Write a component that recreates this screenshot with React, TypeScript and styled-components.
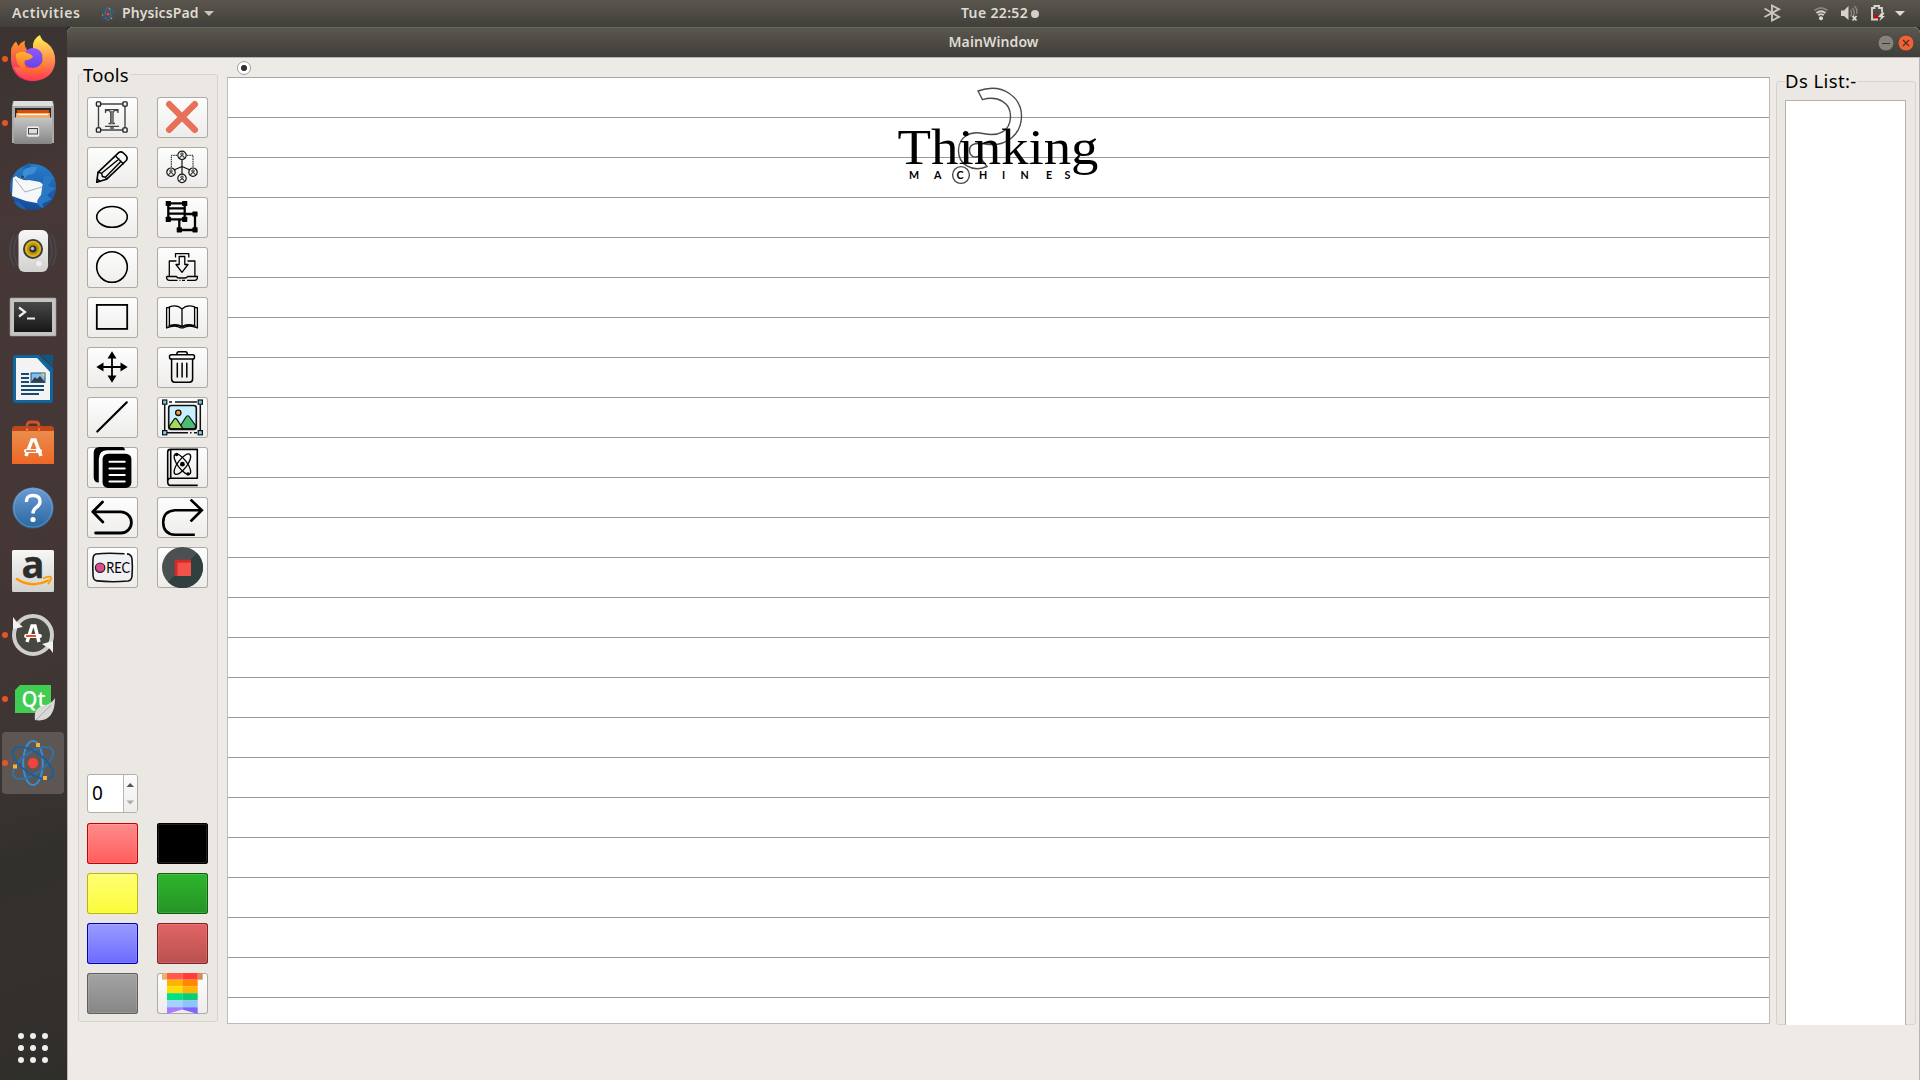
import React from 'react';
import styled, { createGlobalStyle } from 'styled-components';

const Global = createGlobalStyle`
  * { box-sizing: border-box; }
  body { margin: 0; overflow: hidden; background: #35312e; font-family: "Noto Sans", "Open Sans", sans-serif; }
  svg { display: block; overflow: visible; flex: none; }
`;

const Desktop = styled.div`
  width: 1920px;
  height: 1080px;
  display: grid;
  grid-template-rows: 27px 1fr;
  background: #383230;
`;
const TopBar = styled.header`
  display: grid;
  grid-template-columns: 961px auto 1fr;
  align-items: center;
  background: linear-gradient(#5a564e, #413f3a);
  color: #dfdbd2;
  font: 600 14px/25px "Noto Sans", sans-serif;
`;
const BarSide = styled.div`
  display: flex;
  align-items: center;
  padding-left: 12px;
`;
const BarLabel = styled.span<{ $w: number; $sp?: number; $pad?: number }>`
  width: ${p => p.$w}px;
  padding: 0 0 2px ${p => p.$pad ?? 0}px;
  letter-spacing: ${p => p.$sp ?? 0}px;
  white-space: nowrap;
`;
const Clock = styled.div`
  display: flex;
  align-items: center;
`;
const ClockDot = styled.i`
  width: 8px;
  height: 8px;
  border-radius: 50%;
  background: #d3d0c9;
`;
const Tray = styled.div`
  display: flex;
  justify-content: flex-end;
`;
const Work = styled.div`
  display: flex;
  min-height: 0;
  background: #2b2826;
`;
const Launcher = styled.nav`
  width: 67px;
  display: flex;
  flex-direction: column;
  background: linear-gradient(160deg, #3a3331 0%, #463836 18%, #453735 45%, #3e3634 66%, #32302d 78%, #34302d 88%, #302e2b 100%);
`;
const LaunchItem = styled.div<{ $active?: boolean }>`
  height: 62px;
  width: 62px;
  margin: 1px 0 1px 2px;
  border-radius: 4px;
  display: flex;
  align-items: center;
  background: ${p => (p.$active ? '#5d5653' : 'transparent')};
`;
const RunDot = styled.i<{ $on?: boolean }>`
  width: 6px;
  height: 6px;
  border-radius: 50%;
  margin-right: 1px;
  background: ${p => (p.$on ? '#e95420' : 'transparent')};
`;
const AppsButton = styled.div`
  margin: auto 0 17px 18px;
  display: grid;
  grid-template-columns: repeat(3, 6px);
  gap: 6px;
`;
const AppsDot = styled.i`
  height: 6px;
  border-radius: 50%;
  background: #f0efed;
`;
const Window = styled.main`
  flex: 1;
  display: flex;
  flex-direction: column;
  border-radius: 6px 6px 0 0;
  overflow: hidden;
  background: #eeebe6;
`;
const TitleBar = styled.div`
  height: 30px;
  display: grid;
  grid-template-columns: 1fr auto 1fr;
  align-items: center;
  background: linear-gradient(#5a574f, #403e39);
  border-top: 1px solid #67645c;
  color: #dfdbd2;
  font: 600 14px/25px "Noto Sans", sans-serif;
`;
const Controls = styled.div`
  display: flex;
  justify-content: flex-end;
  gap: 4px;
  padding-right: 6px;
`;
const Content = styled.div`
  flex: 1;
  display: flex;
  align-items: flex-start;
  border: solid #b9b5b0;
  border-width: 1px 1px 0;
  background: #eeebe6;
`;
const Group = styled.section<{ $w: number; $h: number; $mt: number; $ml: number }>`
  position: relative;
  flex: none;
  width: ${p => p.$w}px;
  height: ${p => p.$h}px;
  margin: ${p => p.$mt}px 0 0 ${p => p.$ml}px;
  border: 1px solid #d6d3ce;
  border-radius: 3px;
  background: #ebe8e3;
  display: flex;
  flex-direction: column;
`;
const GroupTitle = styled.h2<{ $x: number; $y: number; $w: number; $sp: number }>`
  position: absolute;
  left: ${p => p.$x}px;
  top: ${p => p.$y}px;
  width: ${p => p.$w}px;
  margin: 0;
  background: linear-gradient(#eeebe6 50%, #ebe8e3 50%);
  white-space: nowrap;
  color: #000;
  font: 400 18.5px/26px "Noto Sans", sans-serif;
  letter-spacing: ${p => p.$sp}px;
`;
const ButtonGrid = styled.div<{ $mt: number }>`
  display: grid;
  grid-template-columns: 51px 51px;
  grid-auto-rows: 41px;
  gap: 9px 19px;
  margin: ${p => p.$mt}px 0 0 8px;
`;
const ToolButton = styled.button<{ $line?: string; $from?: string; $to?: string }>`
  width: 51px;
  height: 41px;
  padding: 0;
  display: flex;
  border: 0;
  border-radius: 3px;
  box-shadow: inset 0 0 0 1px ${p => p.$line ?? '#adaaa6'}, inset 0 0 0 2px #ffffff20;
  background: linear-gradient(${p => p.$from ?? '#fefefe'}, ${p => p.$to ?? '#edecea'});
`;
const Spin = styled.div`
  width: 51px;
  height: 39px;
  margin: 186px 0 0 8px;
  display: grid;
  grid-template-columns: 1fr 14px;
  border: 1px solid #b3b0ab;
  border-radius: 3px;
  background: #fff;
  overflow: hidden;
`;
const SpinValue = styled.span`
  padding-left: 4px;
  font: 400 19px/36px "Noto Sans", sans-serif;
`;
const SpinArrows = styled.div`
  border-left: 1px solid #b9b6b2;
  background: linear-gradient(#fcfcfc, #eeedeb);
`;
const Page = styled.div`
  width: 1543px;
  height: 947px;
  border: 1px solid #a5a5a5;
  border-left-color: #bbb;
  border-right-color: #bbb;
  border-bottom-color: #bbb;
  background: repeating-linear-gradient(#fff 0 39px, #9a9a9a 39px 40px);
  padding-left: 670px;
`;
const PageColumn = styled.div`
  margin-left: 9px;
`;
const PageTabs = styled.div`
  height: 19px;
  padding: 3px 0 0 10px;
`;
const Radio = styled.div`
  width: 14px;
  height: 14px;
  border-radius: 50%;
  border: 1px solid #a4a19d;
  background: radial-gradient(circle, #333 0 2.7px, #fff 3.5px);
`;
const List = styled.div`
  width: 121px;
  height: 925px;
  flex: none;
  margin: 18px 0 0 8px;
  border: solid #b5b2ae;
  border-width: 1px 1px 0;
  background: #fff;
`;

const S = { fill: 'none', stroke: '#000', strokeWidth: 1.5, strokeLinecap: 'round', strokeLinejoin: 'round' } as const;
const Tool = ({ children }: { children?: React.ReactNode }) => (
  <svg width="51" height="41" viewBox="0 0 51 41">{children}</svg>
);

const Person = ({ x, y }: { x: number; y: number }) => (
  <g transform={`translate(${x} ${y})`} fill="none" stroke="#111">
    <circle r="4.2" strokeWidth="1.2" fill="#f8f8f7" />
    <circle cy="-1.2" r="1.2" strokeWidth=".9" />
    <path d="M-2.3 2.8Q-2 .5 0 .5T2.3 2.8" strokeWidth="1" />
  </g>
);

const tools: React.ReactNode[] = [
  <Tool>
    <g fill="none" stroke="#444" strokeWidth="1.4">
      <path d="M11.5 7H38V33H11.5Z" />
      {[[11.5, 7], [38, 7], [11.5, 33], [38, 33]].map(([x, y], i) => <rect key={i} x={x - 2.1} y={y - 2.1} width="4.2" height="4.2" rx=".8" fill="#f5f5f4" stroke="#222" />)}
      <path d="M18.5 16V12.7H31V16M18.5 14Q23.7 12 23.7 17V26M31 14Q26 12 26 17V26M21.5 26.5H28M18 29.3H32M23 31H27" strokeWidth="1.3" />
      <path d="M24.8 14V27" strokeWidth="2" stroke="#777" />
    </g>
  </Tool>,
  <Tool><path d="M12.2 7.2L37.8 32.8M37.8 7.2L12.2 32.8" stroke="#e86f58" strokeWidth="6.4" strokeLinecap="round" /></Tool>,
  <Tool><g {...S} strokeWidth={1.6}><path d="M9.7 35.3L11 25.3L31.7 5.7Q34 4 36.4 6L39.4 9Q41 11.3 39.3 13.5L19.5 32.3Z" /><path d="M28.5 9L36.3 16.8M11 25.3L14.6 26.2L15.4 29.5L18.5 30.2L19.5 32.3M14.6 26.2L32 12M18.5 30.2L33.8 14.5M10.4 32L13 34.3" strokeWidth="1.4" /></g></Tool>,
  <Tool>
    <g fill="none" stroke="#111" strokeWidth="1"><path d="M20 8.3H14.3V20M30 8.3H36V20" strokeDasharray="1.5 .8" /><path d="M25 12V27M25 19.5L17 23M25 19.5L33 23" strokeWidth="1.2" /></g>
    <Person x={25} y={8.3} /><Person x={14} y={25.2} /><Person x={36} y={25.2} /><Person x={25} y={31.4} />
  </Tool>,
  <Tool><ellipse cx="25" cy="19.9" rx="15.3" ry="10.4" {...S} strokeWidth={1.6} /></Tool>,
  <Tool>
    <g fill="none" stroke="#000" strokeWidth="2.3"><path d="M11.3 6.3H27.7V22.3H11.3ZM28 17H38V33H22.3V23M11 11.4H28M11 16.6H28" /></g>
    {[[11.3, 6.5], [27.7, 6.5], [11.3, 22.3], [27.7, 22.3], [38, 17], [22.3, 32.8], [38, 32.8]].map(([x, y], i) => <rect key={i} x={x - 2.6} y={y - 2.6} width="5.2" height="5.2" rx=".6" />)}
  </Tool>,
  <Tool><circle cx="25" cy="20" r="15.3" {...S} strokeWidth={1.6} /></Tool>,
  <Tool><g {...S} strokeWidth={1.3} strokeLinecap="butt"><path d="M18.5 10.5V6.7H31.8V10.5M19.5 14H12.3V29M30.5 14H37.9V29M22.2 9.5H27.8V17.5H31L25 25.3L19 17.5H22.2ZM9.5 29.5H19.5Q20 31 22 31H28Q30 31 30.5 29.5H40.5Q40.5 33.4 37.5 33.4H30M9.5 29.5Q9.5 33.4 12.5 33.4H20.5M22.5 33.4H23.5M25 33.4H28" /></g></Tool>,
  <Tool><rect x="9.8" y="7.9" width="30.4" height="24" {...S} strokeWidth={1.8} strokeLinejoin="miter" /></Tool>,
  <Tool><g {...S} strokeWidth={1.3}><path d="M25 12V29.5Q20 26.5 12.4 28.7V9.8Q20 7 25 12Q30 7 37.6 9.8V28.7Q30 26.5 25 29.5" /><path d="M12 10.7H9.6V31Q18 27.5 23.5 30.8H26.5Q32 27.5 40.4 31V10.7H38" /><path d="M11 29.2Q19 27 25 30Q31 27 39 29.2" strokeWidth="1" /></g></Tool>,
  <Tool><path d="M25 8V32M13 20H37" stroke="#000" strokeWidth="1.8" /><path d="M25 4.3L29.5 11.5H20.5ZM25 35.7L29.5 28.5H20.5ZM9.3 20L16.5 15.5V24.5ZM40.7 20L33.5 15.5V24.5Z" /></Tool>,
  <Tool><g {...S}><rect x="12.5" y="7.8" width="25" height="4.2" rx="1.8" /><path d="M19.8 7.3Q20 4.8 21.7 4.8H28.5Q30.2 4.8 30.4 7.3M14.6 12.5V32Q14.6 35.2 17.8 35.2H32.4Q35.6 35.2 35.6 32V12.5M20.3 16.3V30M25.1 16.3V30M29.8 16.3V30" /></g></Tool>,
  <Tool><path d="M10.3 34.5L39.8 5.3" stroke="#000" strokeWidth="2.2" strokeLinecap="round" /></Tool>,
  <Tool>
    <path d="M7.7 8V33M43.3 8V33M12 5.1H15M18 5.1H40M10 35.7H31M33 35.7H34.5M37 35.7H40" stroke="#111" strokeWidth="1.5" fill="none" />
    <rect x="11.7" y="8.5" width="27.6" height="24" rx="2.5" fill="#c7efff" stroke="#111" strokeWidth="1.6" />
    <circle cx="21.3" cy="15.8" r="2.7" fill="#ff9f2e" stroke="#111" strokeWidth="1.3" />
    <path d="M21.5 31.7L29 20Q30.5 17.5 32.5 20L38.5 28.5V30Q38.5 31.7 36.8 31.7Z" fill="#4cbe72" stroke="#111" strokeWidth="1.2" />
    <path d="M12.4 29.2L17.3 22.2Q18.5 20.7 19.7 22.2L26 31.7H14Q12.4 31.7 12.4 29.2Z" fill="#a6d957" stroke="#111" strokeWidth="1.2" />
    {[[7.7, 5.1], [43.3, 5.1], [7.7, 35.7], [43.3, 35.7]].map(([x, y], i) => <rect key={i} x={x - 2.1} y={y - 2.1} width="4.2" height="4.2" fill="#7ecbf0" stroke="#111" strokeWidth="1.2" />)}
  </Tool>,
  <Tool>
    <path d="M35 0H12.5Q6.7 0 6.7 6V30Q6.7 35.5 11.8 35.5V12.5Q11.8 3.3 20.5 3.3H38Q37.5 0 35 0Z" />
    <rect x="15.6" y="6.7" width="28.8" height="34.2" rx="5.5" />
    <path d="M22.5 14.7H37.7M22.5 21.5H37.7M22.5 28H37.7M22.5 34.5H37.7" stroke="#fff" strokeWidth="2.1" strokeLinecap="round" />
  </Tool>,
  <Tool>
    <g {...S} strokeLinecap="butt" strokeWidth={1.5}>
      <path d="M40.7 38.4H13.5Q10.7 38.4 10.7 34.8V5Q10.7 2.4 13.5 2.4H40.3V31.2H13.5Q10.7 31.2 10.7 34.8M13.7 2.5V31" strokeWidth="1.6" />
      {[53, -53].map(a => <ellipse key={a} cx="25.4" cy="17.2" rx="12.3" ry="4.6" transform={`rotate(${a} 25.4 17.2)`} strokeWidth="1.3" />)}
    </g>
    <circle cx="25.4" cy="17.2" r="2.4" /><circle cx="19.6" cy="7.5" r="1.7" /><circle cx="31" cy="27" r="1.7" />
  </Tool>,
  <Tool><path d="M15.5 5L5.8 14.8L15.8 25M6.3 14.8H33.8A10.6 10.6 0 0 1 33.8 36H8.6" {...S} strokeWidth={2.8} /></Tool>,
  <Tool><path d="M34.5 3.5L44.8 13.2L34.5 23.5M44 13.2H18Q6.2 14 6.2 25.5T18 37.8H36.5" {...S} strokeLinecap="square" strokeLinejoin="miter" strokeWidth={2.6} /></Tool>,
  <Tool>
    <path d="M37.5 6.8Q20 5.6 9 7Q6.3 7.6 6 12Q5.5 20 6.1 29Q6.6 33.5 10 33.9Q25 35.5 41 34Q44.7 33.5 45 29Q45.8 20 45 12Q44.5 7.2 40 6.9" fill="#f1f0f4" stroke="#111" strokeWidth="1.6" />
    <circle cx="13.1" cy="20.7" r="4.7" fill="#dc4a8f" stroke="#222" strokeWidth="1.2" />
    <text x="19.2" y="26.2" fontFamily="Lato, sans-serif" fontSize="15.3" textLength="24" lengthAdjust="spacingAndGlyphs">REC</text>
  </Tool>,
  <Tool>
    <circle cx="25.5" cy="20.5" r="20.5" fill="#4b5053" /><path d="M40 6A20.5 20.5 0 0 1 11 35Z" fill="#2f403e" />
    <path d="M17.7 12.7H34V29H17.7Z" fill="#d62b27" /><path d="M20.5 15.7H34V29H20.5Z" fill="#f2524a" />
  </Tool>,
];

const swatches = [
  ['#c40000', '#ff8c8c', '#ff5c5c'], ['#000', '#000', '#000'],
  ['#bcb800', '#ffff76', '#fbfb38'], ['#0b6310', '#2fb52d', '#259425'],
  ['#0000b4', '#9c9cff', '#6a6aff'], ['#852024', '#e26464', '#b95151'],
  ['#5f5f5f', '#a4a4a4', '#868686'],
];
const stripes = [
  ['#ff5a4c', '#ff3e3a', 0, 6.7], ['#ffb400', '#ff8a00', 6.7, 6.6], ['#ffdc00', '#ffb400', 13.3, 6.9],
  ['#00e084', '#0ccb72', 20.2, 7.2], ['#a5d2ff', '#8fc3ff', 27.4, 7],
] as const;

const Launch = ({ children }: { children?: React.ReactNode }) => <svg width="48" height="48" viewBox="0 0 48 48">{children}</svg>;

const Atom = ({ size }: { size: number }) => (
  <svg width={size} height={size} viewBox="0 0 48 48">
    <g fill="none" strokeWidth="1.9">
      <ellipse cx="24" cy="24" rx="9.8" ry="22" stroke="#3590dc" />
      <ellipse cx="24" cy="24" rx="23.500" ry="10.5" transform="rotate(-35 24 24)" stroke="#2873b0" />
      <ellipse cx="24" cy="24" rx="23.500" ry="10.5" transform="rotate(35 24 24)" stroke="#175f9f" />
    </g>
    <circle cx="24" cy="24" r="5.2" fill="#ee4340" />
    <path d="M27 4H31V8H27ZM4 25.5H8V29.5H4ZM34 37H38V41H34Z" fill="#fbb034" />
  </svg>
);

const launchers: { run?: boolean; active?: boolean; icon: React.ReactNode }[] = [
  { run: true, icon: <Launch>
    <path d="M2 15Q3 10 7 6.5L9.5 11Q12 7 16 5.5Q15 10 17 13L33 42Q28 47 20 46Q3 43 2 25Z" fill="url(#ff)" />
    <path d="M24 13Q23 4 31 0Q32 5 38 8Q47 15 46.2 27Q44 44 26 46Q10 46 5 32L15 33Q32 36 24 13Z" fill="url(#fy)" />
    <circle cx="24" cy="23" r="10" fill="url(#fp)" />
    <path d="M7 19Q14 15 18 18Q23 19 24 22Q20 26 16 25Q14 31 20 35Q26 37 31 33Q35 29 33 20Q40 29 33 36Q24 43 14 35Q6 28 7 19Z" fill="url(#fo)" />
  </Launch> },
  { run: true, icon: <Launch>
    <path d="M4 2H44L45 8V44H3V8Z" fill="#a9a9a9" /><path d="M5 2H43L44.5 7H3.5Z" fill="#dedede" />
    <path d="M6 9H42V20H6Z" fill="#2c2826" /><path d="M8 11H40V19H8Z" fill="#cf4f14" /><path d="M7 14H41V20H7Z" fill="#f6a655" /><path d="M9 15.5H39" stroke="#fff3e0" strokeWidth="1.4" />
    <rect x="5" y="18.5" width="38" height="26.5" rx="1" fill="url(#gr)" />
    <rect x="17.5" y="27" width="13" height="11" rx="2" fill="#eee" stroke="#999" strokeWidth=".5" /><rect x="19.5" y="29.5" width="9" height="5.5" fill="#dedede" stroke="#444" />
  </Launch> },
  { icon: <Launch>
    <circle cx="24" cy="24" r="23" fill="url(#tb)" />
    <path d="M13 6Q17 0 22 0L21 5ZM5 38Q8 46 18 47L10 39Z" fill="#1c63b0" />
    <path d="M14 12Q8 15 10 20L19 12Q27 11 28 4Q13 3 14 12Z" fill="#3e8fd2" />
    <path d="M4 15L7 13Q12 18 20 17L31 19L36 23L33 41L17 38L3 33Z" fill="#f6f7f9" />
    <path d="M6 16L16 29L33 24" fill="none" stroke="#a6afba" />
    <path d="M35 12L45 14L39 23L47 25L38 32L43 36L33 41L35 45Q23 42 32 32Z" fill="#2878c4" />
    <circle cx="13.5" cy="14" r="1.5" fill="#443a37" />
  </Launch> },
  { icon: <Launch>
    <path d="M5 8Q-3 24 5 39M9 7Q1 24 9 39M43 8Q51 24 43 39M39 7Q47 24 39 39" stroke="#496177" fill="none" strokeWidth="1.4" opacity=".45" />
    <rect x="9.5" y="3" width="29.5" height="42" rx="6" fill="url(#wh)" />
    <circle cx="24" cy="22" r="10" fill="#34373d" /><circle cx="24" cy="22" r="8.2" fill="#d9b11d" /><circle cx="24" cy="22" r="6" fill="#bc9306" /><circle cx="24" cy="22" r="3.5" fill="#2d3038" /><circle cx="23.5" cy="21.5" r="1.7" fill="#bbc3c9" />
    <circle cx="30" cy="36.5" r="3.7" fill="#eee" stroke="#ccc" />
  </Launch> },
  { icon: <Launch>
    <g transform="translate(0 1.5)">
      <rect x="1" y="5.5" width="46" height="38" rx="1" fill="#c4c4c4" stroke="#999" strokeWidth=".6" /><rect x="5" y="9.5" width="38" height="30" fill="url(#bk)" />
      <path d="M10 15L16 19.5L10 24" fill="none" stroke="#eee" strokeWidth="2.2" /><path d="M18 26H26" stroke="#eee" strokeWidth="2" />
    </g>
  </Launch> },
  { icon: <Launch>
    <path d="M7 0H30L44 13V45Q44 48 41 48H7Q4 48 4 45V3Q4 0 7 0Z" fill="#0e659f" /><path d="M32 0H44V12Z" fill="#125682" />
    <path d="M7 3H28L41 17V45H7Z" fill="#f3f3f3" />
    <path d="M12 19H20M12 23H20M12 27H20M12 31H35M12 35H35M12 39H30" stroke="#174c70" strokeWidth="1.9" />
    <rect x="22" y="18" width="14" height="9.5" fill="#81bdf0" stroke="#1a577f" /><path d="M22 27L26 22L28 24L31 21L36 27Z" fill="#363d43" /><path d="M32 18.5H35.5V22Z" fill="#f2cd43" />
  </Launch> },
  { icon: <Launch>
    <path d="M18 15V7Q18 3 22 3H26Q30 3 30 7V15" fill="none" stroke="#d35228" strokeWidth="2.8" />
    <path d="M3 9L5 7H43L45 9V16H3Z" fill="#c04719" /><path d="M3 12H45V45H3Z" fill="url(#or)" />
    <path d="M18 9V13M30 9V13" stroke="#f1713b" strokeWidth="2" />
    <path d="M17 37L23 21H26L32 37" fill="none" stroke="#fff" strokeWidth="3.5" /><path d="M17 32H31" stroke="#fff" strokeWidth="4" strokeLinecap="round" /><path d="M17 32H27" stroke="#eb6527" strokeWidth="1.6" />
  </Launch> },
  { icon: <Launch>
    <circle cx="24" cy="25" r="20.5" fill="url(#bl)" /><circle cx="24" cy="25" r="19" fill="none" stroke="#7fb1dc" opacity=".5" />
    <path d="M17.5 19Q17 12.5 24 12.5Q31 12.5 31 18.5Q31 22 27 24.7Q24 26.8 24 30.5" fill="none" stroke="#fff" strokeWidth="3.4" /><circle cx="24" cy="36.5" r="2.6" fill="#fff" />
  </Launch> },
  { icon: <Launch>
    <rect x="3" y="3" width="42" height="42" rx="1.5" fill="url(#wh)" />
    <text x="24" y="31" textAnchor="middle" fontFamily="Open Sans, sans-serif" fontWeight="700" fontSize="38" fill="#2c2c2c" stroke="#2c2c2c" strokeWidth=".3">a</text>
    <path d="M7 31.500Q22 42 40 33" fill="none" stroke="#f90" strokeWidth="2.5" /><path d="M34 31.5Q42 28 42 31Q42 34 39 37" fill="none" stroke="#f90" strokeWidth="1.8" />
  </Launch> },
  { run: true, icon: <Launch>
    <circle cx="24" cy="24" r="19" fill="#474741" stroke="#cfcfcc" strokeWidth="4" />
    <path d="M4 6L7 10L14 16L4 18ZM44 42L41 38L33 33L44 30Z" fill="#f1f1ef" />
    <path d="M18 31L23 15H26L30 31" fill="none" stroke="#fff" strokeWidth="3.4" /><path d="M17 25H31" stroke="#fff" strokeWidth="3.8" strokeLinecap="round" /><path d="M17 25H27" stroke="#e95420" strokeWidth="2" />
  </Launch> },
  { run: true, icon: <Launch>
    <path d="M11 10H42V38H6V15Z" fill="#41cd52" />
    <text x="12.5" y="31.5" fontFamily="Open Sans, sans-serif" fontWeight="600" fontSize="22" textLength="24" lengthAdjust="spacingAndGlyphs" fill="#fff">Qt</text>
    <path d="M46 23Q46 45 30 45.5L26 45Q24 32 37 30Q43 28 46 23Z" fill="#d8d8d6" /><path d="M27 45L42 30" stroke="#aaa" />
  </Launch> },
  { run: true, active: true, icon: <Atom size={48} /> },
];

const gradients: [string, string, string][] = [
  ['ff', '#ff9820', '#f0127c'], ['fy', '#fff44f', '#ff3750'], ['fp', '#9059ff', '#6644e0'], ['fo', '#ffb52e', '#ff5a2a'],
  ['gr', '#c6c6c6', '#858585'], ['tb', '#287dcc', '#164a9a'], ['wh', '#f7f7f6', '#d1d1cf'], ['bk', '#484848', '#171717'],
  ['or', '#e98d4c', '#ee6726'], ['bl', '#6b9bd4', '#29679f'],
];

const Gradients = () => (
  <defs>
    {gradients.map(([id, a, b]) => (
      <linearGradient key={id} id={id} x1="0" y1="0" x2="0" y2="1"><stop stopColor={a} /><stop offset="1" stopColor={b} /></linearGradient>
    ))}
  </defs>
);

const StatusIcons = () => (
  <svg width="160" height="27" viewBox="1760 0 160 27">
    <Gradients />
    <path d="M1764.5 8.5L1779 17L1772 20.5V5.5L1779 9.2L1764.5 17" fill="none" stroke="#c9c6bf" strokeWidth="1.9" />
    <g fill="none" stroke="#d6d3cc" strokeWidth="1.8">
      <path d="M1814.5 10.5Q1821 5.5 1827.5 10.5" stroke="#85827b" /><path d="M1816.5 13Q1821 9.5 1825.5 13M1818.3 15.2Q1821 13 1823.7 15.2" />
    </g>
    <circle cx="1821" cy="18.3" r="2" fill="#dfdbd2" />
    <path d="M1841 10.5H1844L1848.5 6V20L1844 16H1841Z" fill="#d6d3cc" />
    <path d="M1850.5 10Q1852.5 13 1850.5 16.5M1852.5 8Q1856 13 1852.5 17M1854.5 6Q1858 10 1856.5 14" fill="none" stroke="#8b8881" strokeWidth="1.4" />
    <path d="M1852.5 16L1856.5 20.5M1856.5 16L1852.5 20.5" stroke="#dfdbd2" strokeWidth="1.8" />
    <path d="M1878 19.5H1872V8H1874.5V6H1879V8H1882V12" fill="none" stroke="#d6d3cc" strokeWidth="1.9" /><path d="M1874 15H1878V18H1874Z" fill="#d00" />
    <path d="M1882 12L1878 17H1881L1879.5 21L1885 16H1882.5L1884.5 13Z" fill="#dfdbd2" />
    <path d="M1895 11H1905L1900 16Z" fill="#dfdbd2" />
  </svg>
);

const letterX = [909, 934, 956.5, 979, 1002, 1020.5, 1046, 1064.5];

const Logo = () => (
  <svg width="204" height="110" viewBox="898 78 204 110">
    <g fill="none" stroke="#4b4b4b" strokeWidth="1.4">
      <path d="M978 91C1003 82 1022 98 1021.5 117C1021 134 1007 146 989 144.5C979 143 969 142 969.5 151C970 156 974 158.5 979 156L987 166.5C972 173 958 164 958.5 150C959 137 970 130.5 983 133.5C999 137 1010 131 1010.5 117C1011 103 998 95 982.5 99.7Z" />
      <circle cx="961" cy="175" r="8.4" />
    </g>
    <text x="897.5" y="164.4" fontFamily="Liberation Serif, serif" fontSize="50" textLength="201" lengthAdjust="spacingAndGlyphs">Thinking</text>
    <text y="179" fontFamily="Lato, Open Sans, sans-serif" fontWeight="700" fontSize="10.7">
      {'MACHINES'.split('').map((c, i) => <tspan key={i} x={letterX[i]}>{c}</tspan>)}
    </text>
  </svg>
);

export default function App() {
  return (
    <Desktop>
      <Global />
      <TopBar>
        <BarSide>
          <BarLabel $w={89} $sp={0.6}>Activities</BarLabel>
          <Atom size={14} />
          <BarLabel $w={89} $pad={7} $sp={0.1}>PhysicsPad</BarLabel>
          <svg width="10" height="6"><path d="M0 0H10L5 5Z" fill="#c9c6bf" /></svg>
        </BarSide>
        <Clock><BarLabel $w={70} $sp={0.35}>Tue 22:52</BarLabel><ClockDot /></Clock>
        <Tray><StatusIcons /></Tray>
      </TopBar>
      <Work>
        <Launcher>
          {launchers.map((l, i) => (
            <LaunchItem key={i} $active={l.active}><RunDot $on={l.run} />{l.icon}</LaunchItem>
          ))}
          <AppsButton>{Array.from({ length: 9 }, (_, i) => <AppsDot key={i} />)}</AppsButton>
        </Launcher>
        <Window>
          <TitleBar>
            <span />
            <BarLabel $w={90} $sp={0.1}>MainWindow</BarLabel>
            <Controls>
              <svg width="16" height="16" viewBox="0 0 16 16"><circle cx="8" cy="8" r="8" fill="#85827b" stroke="#383632" strokeWidth=".7" /><path d="M4 8.5H12" stroke="#3b3935" /></svg>
              <svg width="16" height="16" viewBox="0 0 16 16"><circle cx="8" cy="8" r="8" fill="#ed6336" stroke="#383632" strokeWidth=".7" /><path d="M5 5L11 11M11 5L5 11" stroke="#50301f" strokeWidth="1.2" /></svg>
            </Controls>
          </TitleBar>
          <Content>
            <Group $w={140} $h={948} $mt={16} $ml={10}>
              <GroupTitle $x={4} $y={-13} $w={47} $sp={0.15}>Tools</GroupTitle>
              <ButtonGrid $mt={22}>
                {tools.map((t, i) => <ToolButton key={i}>{t}</ToolButton>)}
              </ButtonGrid>
              <Spin>
                <SpinValue>0</SpinValue>
                <SpinArrows><svg width="13" height="37"><path d="M2.5 12H10L6.2 8Z" fill="#555" /><path d="M2.5 25.5H10L6.2 29.5Z" fill="#aaa" /></svg></SpinArrows>
              </Spin>
              <ButtonGrid $mt={10}>
                {swatches.map(([line, from, to], i) => <ToolButton key={i} $line={line} $from={from} $to={to} />)}
                <ToolButton>
                  <Tool>
                    <path d="M5 0H10V6.7H5Z" fill="#eab16a" /><path d="M40.7 0H45.7V6.7H40.7Z" fill="#d68b54" />
                    {stripes.map(([a, b, y, h]) => <g key={y}><rect x="10" y={y} width="15.3" height={h} fill={a} /><rect x="25.3" y={y} width="15.4" height={h} fill={b} /></g>)}
                    <path d="M10 34.3H25.3V36.5L10 41Z" fill="#a57cff" /><path d="M25.3 34.3H40.7V41L25.3 36.5Z" fill="#8064ff" />
                  </Tool>
                </ToolButton>
              </ButtonGrid>
            </Group>
            <PageColumn>
              <PageTabs><Radio /></PageTabs>
              <Page><Logo /></Page>
            </PageColumn>
            <Group $w={140} $h={944} $mt={23} $ml={6}>
              <GroupTitle $x={8} $y={-14} $w={73} $sp={0.4}>Ds List:-</GroupTitle>
              <List />
            </Group>
          </Content>
        </Window>
      </Work>
    </Desktop>
  );
}
